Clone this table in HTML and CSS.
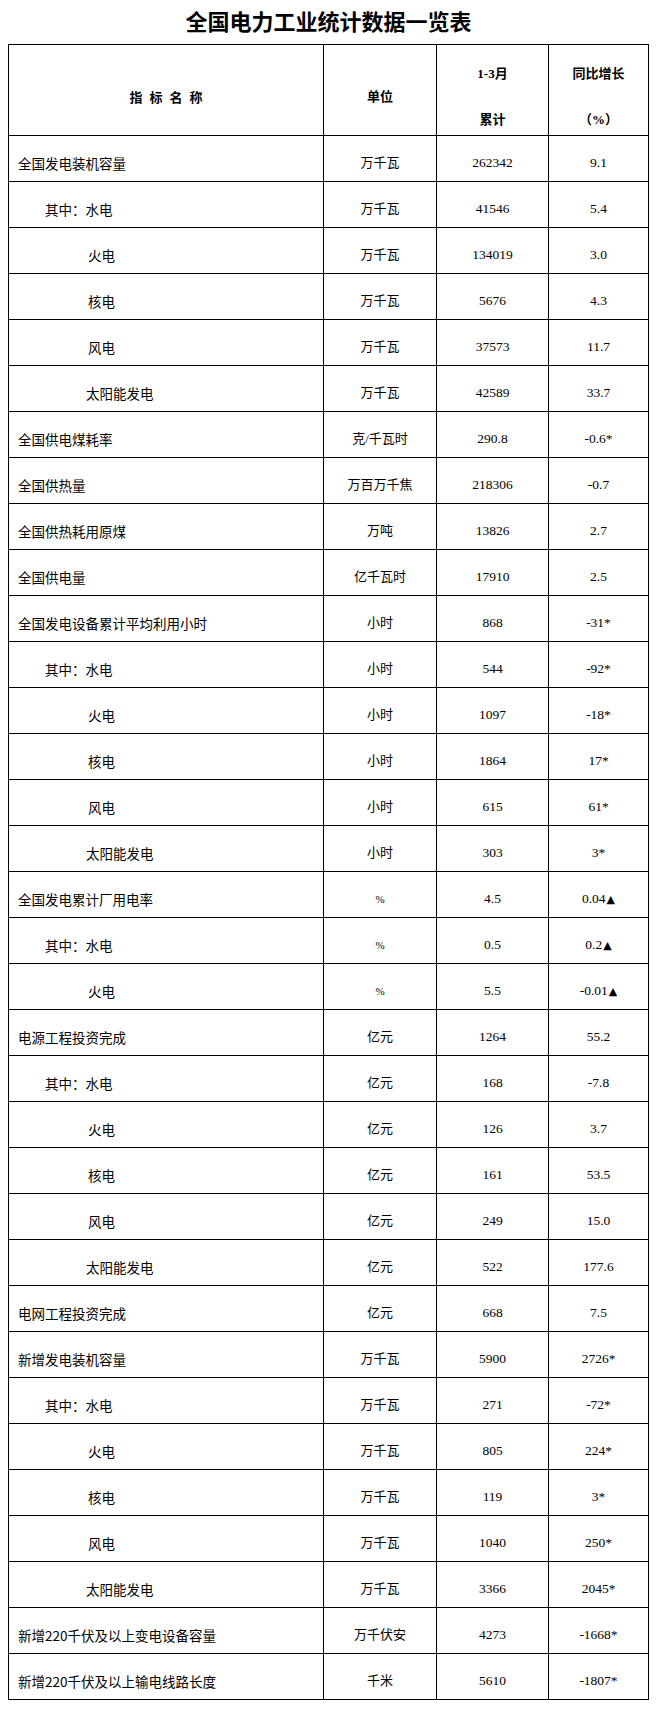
FILE: index.html
```html
<!DOCTYPE html>
<html lang="zh-CN">
<head>
<meta charset="utf-8">
<title>全国电力工业统计数据一览表</title>
<link rel="stylesheet" href="styles.css">
</head>
<body>
<h1 class="title">全国电力工业统计数据一览表</h1>
<table class="stats">
  <colgroup>
    <col class="c-name"><col class="c-unit"><col class="c-val"><col class="c-yoy">
  </colgroup>
  <thead>
    <tr>
      <th><span class="spaced">指标名称</span></th>
      <th>单位</th>
      <th><div class="two"><div>1-3月</div><div>累计</div></div></th>
      <th><div class="two"><div>同比增长</div><div>（%）</div></div></th>
    </tr>
  </thead>
  <tbody>
    <tr><td class="n l0">全国发电装机容量</td><td class="u">万千瓦</td><td class="v">262342</td><td class="v">9.1</td></tr>
    <tr><td class="n l1">其中：水电</td><td class="u">万千瓦</td><td class="v">41546</td><td class="v">5.4</td></tr>
    <tr><td class="n l2">火电</td><td class="u">万千瓦</td><td class="v">134019</td><td class="v">3.0</td></tr>
    <tr><td class="n l2">核电</td><td class="u">万千瓦</td><td class="v">5676</td><td class="v">4.3</td></tr>
    <tr><td class="n l2">风电</td><td class="u">万千瓦</td><td class="v">37573</td><td class="v">11.7</td></tr>
    <tr><td class="n l2s">太阳能发电</td><td class="u">万千瓦</td><td class="v">42589</td><td class="v">33.7</td></tr>
    <tr><td class="n l0">全国供电煤耗率</td><td class="u">克/千瓦时</td><td class="v">290.8</td><td class="v">-0.6*</td></tr>
    <tr><td class="n l0">全国供热量</td><td class="u">万百万千焦</td><td class="v">218306</td><td class="v">-0.7</td></tr>
    <tr><td class="n l0">全国供热耗用原煤</td><td class="u">万吨</td><td class="v">13826</td><td class="v">2.7</td></tr>
    <tr><td class="n l0">全国供电量</td><td class="u">亿千瓦时</td><td class="v">17910</td><td class="v">2.5</td></tr>
    <tr><td class="n l0">全国发电设备累计平均利用小时</td><td class="u">小时</td><td class="v">868</td><td class="v">-31*</td></tr>
    <tr><td class="n l1">其中：水电</td><td class="u">小时</td><td class="v">544</td><td class="v">-92*</td></tr>
    <tr><td class="n l2">火电</td><td class="u">小时</td><td class="v">1097</td><td class="v">-18*</td></tr>
    <tr><td class="n l2">核电</td><td class="u">小时</td><td class="v">1864</td><td class="v">17*</td></tr>
    <tr><td class="n l2">风电</td><td class="u">小时</td><td class="v">615</td><td class="v">61*</td></tr>
    <tr><td class="n l2s">太阳能发电</td><td class="u">小时</td><td class="v">303</td><td class="v">3*</td></tr>
    <tr><td class="n l0">全国发电累计厂用电率</td><td class="u pct">%</td><td class="v">4.5</td><td class="v">0.04<span class="tri">▲</span></td></tr>
    <tr><td class="n l1">其中：水电</td><td class="u pct">%</td><td class="v">0.5</td><td class="v">0.2<span class="tri">▲</span></td></tr>
    <tr><td class="n l2">火电</td><td class="u pct">%</td><td class="v">5.5</td><td class="v">-0.01<span class="tri">▲</span></td></tr>
    <tr><td class="n l0">电源工程投资完成</td><td class="u">亿元</td><td class="v">1264</td><td class="v">55.2</td></tr>
    <tr><td class="n l1">其中：水电</td><td class="u">亿元</td><td class="v">168</td><td class="v">-7.8</td></tr>
    <tr><td class="n l2">火电</td><td class="u">亿元</td><td class="v">126</td><td class="v">3.7</td></tr>
    <tr><td class="n l2">核电</td><td class="u">亿元</td><td class="v">161</td><td class="v">53.5</td></tr>
    <tr><td class="n l2">风电</td><td class="u">亿元</td><td class="v">249</td><td class="v">15.0</td></tr>
    <tr><td class="n l2s">太阳能发电</td><td class="u">亿元</td><td class="v">522</td><td class="v">177.6</td></tr>
    <tr><td class="n l0">电网工程投资完成</td><td class="u">亿元</td><td class="v">668</td><td class="v">7.5</td></tr>
    <tr><td class="n l0">新增发电装机容量</td><td class="u">万千瓦</td><td class="v">5900</td><td class="v">2726*</td></tr>
    <tr><td class="n l1">其中：水电</td><td class="u">万千瓦</td><td class="v">271</td><td class="v">-72*</td></tr>
    <tr><td class="n l2">火电</td><td class="u">万千瓦</td><td class="v">805</td><td class="v">224*</td></tr>
    <tr><td class="n l2">核电</td><td class="u">万千瓦</td><td class="v">119</td><td class="v">3*</td></tr>
    <tr><td class="n l2">风电</td><td class="u">万千瓦</td><td class="v">1040</td><td class="v">250*</td></tr>
    <tr><td class="n l2s">太阳能发电</td><td class="u">万千瓦</td><td class="v">3366</td><td class="v">2045*</td></tr>
    <tr><td class="n l0">新增220千伏及以上变电设备容量</td><td class="u">万千伏安</td><td class="v">4273</td><td class="v">-1668*</td></tr>
    <tr><td class="n l0">新增220千伏及以上输电线路长度</td><td class="u">千米</td><td class="v">5610</td><td class="v">-1807*</td></tr>
  </tbody>
</table>
</body>
</html>
```

FILE: styles.css
```css
html, body {
  margin: 0;
  padding: 0;
  background: #ffffff;
}

body {
  font-family: "Liberation Serif", "Noto Sans CJK SC", serif;
  color: #000000;
}

.title {
  margin: 0;
  padding-top: 8px;
  height: 36px;
  box-sizing: border-box;
  font-family: "Noto Sans CJK SC", sans-serif;
  font-size: 22px;
  line-height: 24px;
  font-weight: 700;
  text-align: center;
}

.stats {
  margin-left: 8px;
  margin-top: 8px;
  border-collapse: collapse;
  table-layout: fixed;
  width: 641px;
}

.c-name { width: 315px; }
.c-unit { width: 113px; }
.c-val { width: 112px; }
.c-yoy { width: 100px; }

.stats th,
.stats td {
  border: 1px solid #000000;
}

.stats th {
  height: 76px;
  padding: 14px 0 0;
  vertical-align: middle;
  text-align: center;
  font-family: "Liberation Serif", "Noto Sans CJK SC", serif;
  font-weight: 700;
  font-size: 13px;
  line-height: 16px;
}

.spaced {
  font-family: "Noto Sans CJK SC", sans-serif;
  letter-spacing: 7px;
  margin-right: -7px;
}

.two {
  display: flex;
  flex-direction: column;
  gap: 30px;
}

.stats td {
  height: 36px;
  padding: 9px 0 0;
  vertical-align: middle;
  font-size: 13.5px;
  line-height: 16px;
  white-space: nowrap;
}

.n {
  font-family: "Noto Sans CJK SC", sans-serif;
  font-size: 13px;
  text-align: left;
}

.l0 { padding-left: 9px !important; }
.l1 { padding-left: 36px !important; }
.l2 { padding-left: 79px !important; }
.l2s { padding-left: 77px !important; }

.u {
  text-align: center;
  font-size: 13px !important;
}

.pct {
  font-size: 11px !important;
}

.v {
  text-align: center;
}

.tri {
  font-family: "DejaVu Sans", sans-serif;
  font-size: 11px;
  margin-left: 1px;
}
```
